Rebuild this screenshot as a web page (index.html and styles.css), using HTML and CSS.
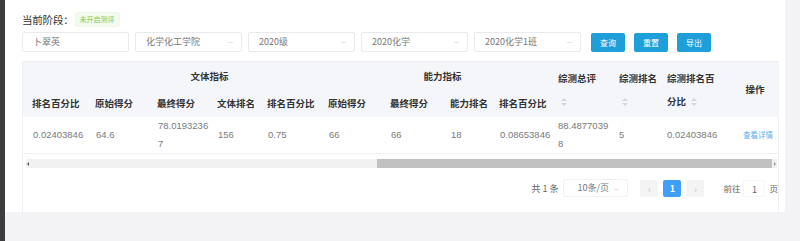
FILE: index.html
```html
<!DOCTYPE html>
<html lang="zh">
<head>
<meta charset="utf-8">
<link rel="stylesheet" href="styles.css">
</head>
<body>
<div class="layout">
  <div class="edge"></div>
  <div class="main">
    <div class="card">
      <div class="stage">
        <span class="stage-label">当前阶段：</span>
        <span class="tag">未开启测评</span>
      </div>
      <div class="filters">
        <div class="field">卜翠英</div>
        <div class="field select">化学化工学院<span class="arrow"></span></div>
        <div class="field select">2020级<span class="arrow"></span></div>
        <div class="field select">2020化学<span class="arrow"></span></div>
        <div class="field select">2020化学1班<span class="arrow"></span></div>
        <button class="btn first">查询</button>
        <button class="btn">重置</button>
        <button class="btn">导出</button>
      </div>
      <div class="table-box">
        <table class="grid">
          <colgroup>
            <col style="width:63px"><col style="width:62px"><col style="width:60px"><col style="width:50px">
            <col style="width:61px"><col style="width:62px"><col style="width:60px"><col style="width:49px">
            <col style="width:62px"><col style="width:61px"><col style="width:48px"><col style="width:70px"><col style="width:48px">
          </colgroup>
          <thead>
            <tr class="group-row">
              <th></th>
              <th colspan="4" class="center">文体指标</th>
              <th colspan="4" class="center">能力指标</th>
              <th rowspan="2" class="tall"><div>综测总评</div><div><span class="sort"><i class="up"></i><i class="down"></i></span></div></th>
              <th rowspan="2" class="tall"><div>综测排名</div><div><span class="sort"><i class="up"></i><i class="down"></i></span></div></th>
              <th rowspan="2" class="tall"><div>综测排名百</div><div>分比 <span class="sort"><i class="up"></i><i class="down"></i></span></div></th>
              <th rowspan="2" class="tall center">操作</th>
            </tr>
            <tr class="sub-row">
              <th>排名百分比</th>
              <th>原始得分</th>
              <th>最终得分</th>
              <th>文体排名</th>
              <th>排名百分比</th>
              <th>原始得分</th>
              <th>最终得分</th>
              <th>能力排名</th>
              <th>排名百分比</th>
            </tr>
          </thead>
          <tbody>
            <tr>
              <td>0.02403846</td>
              <td>64.6</td>
              <td>78.0193236<br>7</td>
              <td>156</td>
              <td>0.75</td>
              <td>66</td>
              <td>66</td>
              <td>18</td>
              <td>0.08653846</td>
              <td>88.4877039<br>8</td>
              <td>5</td>
              <td>0.02403846</td>
              <td class="center"><a class="link">查看详情</a></td>
            </tr>
          </tbody>
        </table>
        <div class="scrollbar">
          <span class="sb-arrow left"></span>
          <div class="track"><div class="thumb"></div></div>
          <span class="sb-arrow right"></span>
        </div>
        <div class="pager">
          <span class="total">共 1 条</span>
          <div class="size">10条/页<span class="arrow"></span></div>
          <span class="pbtn">&lsaquo;</span>
          <span class="pbtn active">1</span>
          <span class="pbtn last">&rsaquo;</span>
          <span class="goto">前往</span>
          <span class="goto-input">1</span>
          <span class="goto">页</span>
        </div>
      </div>
    </div>
  </div>
</div>
</body>
</html>
```
FILE: styles.css
```css
* { box-sizing: border-box; }
html, body { margin: 0; padding: 0; }
body {
  width: 800px;
  height: 241px;
  overflow: hidden;
  background: #f3f3f5;
  font-family: "Noto Sans CJK SC", "Liberation Sans", sans-serif;
  color: #606266;
}
.layout { display: flex; height: 241px; }
.edge { width: 5px; background: #3c3c3e; flex: none; }
.main { flex: 1; padding-right: 15px; }
.card {
  background: #fff;
  height: 212px;
  padding: 11px 0 0 17px;
}
.stage { display: flex; align-items: center; height: 17px; }
.stage-label { font-size: 10.5px; color: #333; white-space: nowrap; margin-right: 1px; letter-spacing: -0.2px; }
.tag {
  font-size: 7px;
  color: #7bc95a;
  background: #f3faee;
  border: 1px solid #edf7e6;
  border-radius: 3px;
  height: 15px;
  line-height: 13px;
  padding: 0 4px;
}
.filters { display: flex; margin-top: 4px; height: 20px; align-items: center; }
.field {
  position: relative;
  width: 107px;
  height: 20px;
  border: 1px solid #e8eaee;
  border-radius: 2px;
  font-size: 9px;
  line-height: 18px;
  padding-left: 10px;
  color: #777;
  margin-right: 6px;
  white-space: nowrap;
}
.field .arrow, .size .arrow {
  position: absolute;
  right: 8px;
  top: 9px;
  width: 5px;
  height: 1px;
  background: #e4e4e4;
}
.btn {
  font-family: inherit;
  width: 34px;
  height: 19px;
  background: #1f9fda;
  color: #fff;
  border: none;
  border-radius: 2px;
  font-size: 8px;
  padding: 0;
  margin-right: 9px;
}
.btn.first { margin-left: 4px; }
.table-box {
  margin-top: 9px;
  width: 757px;
  height: 154px;
  border: 1px solid #eef0f4;
  border-bottom: none;
}
.grid {
  table-layout: fixed;
  border-collapse: collapse;
  width: 756px;
}
.grid th {
  background: #f5f6fa;
  font-size: 9.5px;
  font-weight: bold;
  color: #333;
  text-align: left;
  padding: 0 0 0 9px;
  white-space: nowrap;
}
.grid th.center, .grid td.center { text-align: center; padding-left: 0; }
.group-row th { height: 27px; vertical-align: middle; }
.group-row th.center { padding-left: 14px; }
.sub-row th { height: 28px; }
.grid th.tall { line-height: 23px; vertical-align: middle; padding-left: 6px; }
.grid th.tall.center { padding-left: 0; }
.sort {
  display: inline-flex;
  flex-direction: column;
  gap: 2px;
  vertical-align: middle;
  margin-left: 3px;
}
.sort i { display: block; width: 0; height: 0; border-left: 3px solid transparent; border-right: 3px solid transparent; }
.sort .up { border-bottom: 3px solid #d4d6db; }
.sort .down { border-top: 3px solid #d4d6db; }
.grid td {
  height: 35px;
  font-size: 9.5px;
  color: #7a7a7a;
  line-height: 18px;
  padding: 0 0 0 10px;
  border-bottom: 1px solid #eef0f4;
  font-family: "Liberation Sans", "Noto Sans CJK SC", sans-serif;
}
.grid td:nth-child(n+10) { padding-left: 6px; }
.link { color: #5aaef0; font-size: 7.5px; font-family: "Noto Sans CJK SC", sans-serif; }
.scrollbar {
  display: flex;
  align-items: center;
  height: 9px;
  margin: 5px 1px 0 3px;
  background: #f1f1f1;
}
.sb-arrow { width: 5px; height: 9px; position: relative; }
.sb-arrow::after {
  content: "";
  position: absolute;
  top: 3px;
  width: 0; height: 0;
  border-top: 2px solid transparent;
  border-bottom: 2px solid transparent;
}
.sb-arrow.left::after { left: 1px; border-right: 2px solid #555; }
.sb-arrow.right::after { right: 1px; border-left: 2px solid #999; }
.track { flex: 1; height: 9px; display: flex; justify-content: flex-end; }
.thumb { width: 395px; height: 9px; background: #c1c1c1; }
.pager {
  display: flex;
  align-items: center;
  justify-content: flex-end;
  height: 18px;
  margin-top: 11px;
  padding-right: 0;
  font-size: 9px;
  color: #666;
}
.total { margin-right: 5px; }
.size {
  position: relative;
  width: 65px;
  height: 18px;
  border: 1px solid #f0f1f4;
  border-radius: 2px;
  padding-left: 13px;
  line-height: 16px;
  margin-right: 12px;
  color: #777;
}
.pbtn {
  width: 18px;
  height: 17px;
  background: #f4f4f5;
  color: #c0c4cc;
  text-align: center;
  line-height: 17px;
  border-radius: 2px;
  margin-right: 5px;
  font-size: 10px;
}
.pbtn.active { background: #409eff; color: #fff; font-weight: bold; font-size: 9px; }
.pbtn.last { margin-right: 19px; }
.goto { font-size: 8.5px; }
.goto-input {
  width: 22px;
  height: 17px;
  margin: 0 4px 0 3px;
  text-align: center;
  line-height: 17px;
  border: 1px solid #f5f6f8;
}
```
